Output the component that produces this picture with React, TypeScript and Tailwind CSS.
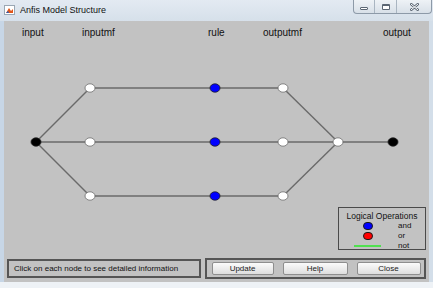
import React from "react";

const FONT = { fontFamily: '"Liberation Sans", Arial, sans-serif' };

type Pt = [number, number];

// node centres, relative to the grey client area
const inputNode: Pt = [32, 121];
const inputMf: Pt[] = [
  [86, 67],
  [86, 121],
  [86, 175],
];
const rules: Pt[] = [
  [211, 67],
  [211, 121],
  [211, 175],
];
const outputMf: Pt[] = [
  [279, 67],
  [279, 121],
  [279, 175],
];
const sumNode: Pt = [334, 121];
const outputNode: Pt = [389, 121];

const labels: { text: string; x: number }[] = [
  { text: "input", x: 18 },
  { text: "inputmf", x: 78 },
  { text: "rule", x: 204 },
  { text: "outputmf", x: 259 },
  { text: "output", x: 379 },
];

function Line({ a, b }: { a: Pt; b: Pt }) {
  return <line x1={a[0]} y1={a[1]} x2={b[0]} y2={b[1]} stroke="#6a6a6a" strokeWidth={1.4} />;
}

function Node({ p, fill }: { p: Pt; fill: string }) {
  return (
    <ellipse
      cx={p[0]}
      cy={p[1]}
      rx={5}
      ry={4.2}
      fill={fill}
      stroke={fill === "#ffffff" ? "#6a6a6a" : "#202020"}
      strokeWidth={0.8}
    />
  );
}

function ModelDiagram() {
  return (
    <svg width={425} height={237} viewBox="0 0 425 237" className="block" style={FONT}>
      {labels.map((l) => (
        <text key={l.text} x={l.x} y={15} fontSize={10} fill="#111">
          {l.text}
        </text>
      ))}
      {inputMf.map((p, i) => (
        <g key={i}>
          <Line a={inputNode} b={p} />
          <Line a={p} b={rules[i]} />
          <Line a={rules[i]} b={outputMf[i]} />
          <Line a={outputMf[i]} b={sumNode} />
        </g>
      ))}
      <Line a={sumNode} b={outputNode} />
      <Node p={inputNode} fill="#000000" />
      {inputMf.map((p, i) => (
        <Node key={"im" + i} p={p} fill="#ffffff" />
      ))}
      {rules.map((p, i) => (
        <Node key={"r" + i} p={p} fill="#0000ff" />
      ))}
      {outputMf.map((p, i) => (
        <Node key={"om" + i} p={p} fill="#ffffff" />
      ))}
      <Node p={sumNode} fill="#ffffff" />
      <Node p={outputNode} fill="#000000" />
    </svg>
  );
}

function Legend() {
  return (
    <div
      className="absolute left-[334px] top-[186px] h-[43px] w-[88px] border border-[#4a4a4a] text-[8px] text-[#111]"
      style={FONT}
    >
      <div className="pt-[3px] text-center text-[8.5px] leading-[10px]">Logical Operations</div>
      <div className="flex h-[10px] items-center">
        <div className="flex w-[56px] justify-center pl-[1px]">
          <span className="block h-[8px] w-[10px] rounded-full border border-[#1a1a1a] bg-[#0000ff]" />
        </div>
        <span className="pl-[3px] leading-none">and</span>
      </div>
      <div className="flex h-[10px] items-center">
        <div className="flex w-[56px] justify-center pl-[1px]">
          <span className="block h-[8px] w-[10px] rounded-full border border-[#1a1a1a] bg-[#ff0000]" />
        </div>
        <span className="pl-[3px] leading-none">or</span>
      </div>
      <div className="flex h-[9px] items-center">
        <div className="flex w-[56px] justify-center pl-[1px]">
          <span className="block h-[2px] w-[27px] bg-[#4fe04f]" />
        </div>
        <span className="pl-[3px] leading-none">not</span>
      </div>
    </div>
  );
}

function Button({ label, width }: { label: string; width: string }) {
  return (
    <button
      type="button"
      className={`flex h-[13px] ${width} items-center justify-center rounded-[2px] border border-[#8e8e8e] bg-gradient-to-b from-[#fbfbfb] to-[#dedede] text-[8px] leading-none text-[#222]`}
      style={FONT}
    >
      {label}
    </button>
  );
}

function TitleBar() {
  return (
    <div className="flex h-[21px] items-start bg-gradient-to-b from-[#e3eaf2] to-[#d6e0ea]">
      <div className="flex h-[20px] flex-1 items-center pl-[4px]">
        <svg width={11} height={10} viewBox="0 0 11 10" className="mr-[5px] block">
          <rect x={0.5} y={0.5} width={10} height={9} fill="#ffffff" stroke="#9aa7b4" />
          <path d="M2 8 L5 3 L7 6 L9 4 L9 8 Z" fill="#e0561a" />
          <path d="M2 8 L4 6 L5 8 Z" fill="#2b5fb8" />
        </svg>
        <span className="text-[9px] leading-none text-[#111]" style={FONT}>
          Anfis Model Structure
        </span>
      </div>
      <div className="mr-[1px] flex h-[14px] overflow-hidden rounded-b-[4px] border border-t-0 border-[#8d9aa8] bg-gradient-to-b from-[#eef2f6] to-[#d8e0e8]">
        <div className="flex w-[21px] items-center justify-center border-r border-[#a9b5c1]">
          <span className="mt-[3px] block h-[3px] w-[8px] rounded-[1px] border border-[#5b6673] bg-white" />
        </div>
        <div className="flex w-[22px] items-center justify-center border-r border-[#a9b5c1]">
          <span className="block h-[6px] w-[8px] rounded-[1px] border border-[#5b6673] border-t-2 bg-white" />
        </div>
        <div className="flex w-[34px] items-center justify-center">
          <svg width={9} height={8} viewBox="0 0 9 8" className="block">
            <path d="M1 1 L8 7 M8 1 L1 7" stroke="#5b6673" strokeWidth={2.4} strokeLinecap="round" />
            <path d="M1 1 L8 7 M8 1 L1 7" stroke="#ffffff" strokeWidth={1} strokeLinecap="round" />
          </svg>
        </div>
      </div>
    </div>
  );
}

export default function App() {
  return (
    <div className="h-[288px] w-[433px] overflow-hidden bg-[#dbe5ef]" style={FONT}>
      <TitleBar />
      <div className="flex">
        <div className="w-[4px] bg-[#c7d6e6]" />
        <div className="relative flex h-[261px] w-[425px] flex-col bg-[#c2c2c2]">
          <ModelDiagram />
          <Legend />
          <div className="flex items-start gap-[4px] px-[3px]">
            <div className="mt-[1px] flex h-[19px] w-[194px] items-center border-2 border-[#555] pl-[5px] text-[8px] text-[#111]">
              Click on each node to see detailed information
            </div>
            <div className="flex h-[21px] w-[222px] items-center border-2 border-[#555] pl-[5px]">
              <Button label="Update" width="w-[62px]" />
              <div className="w-[9px]" />
              <Button label="Help" width="w-[65px]" />
              <div className="w-[9px]" />
              <Button label="Close" width="w-[64px]" />
            </div>
          </div>
        </div>
        <div className="w-[4px] bg-[#d3dee9]" />
      </div>
      <div className="h-[6px] bg-[#eef2f6]" />
    </div>
  );
}
